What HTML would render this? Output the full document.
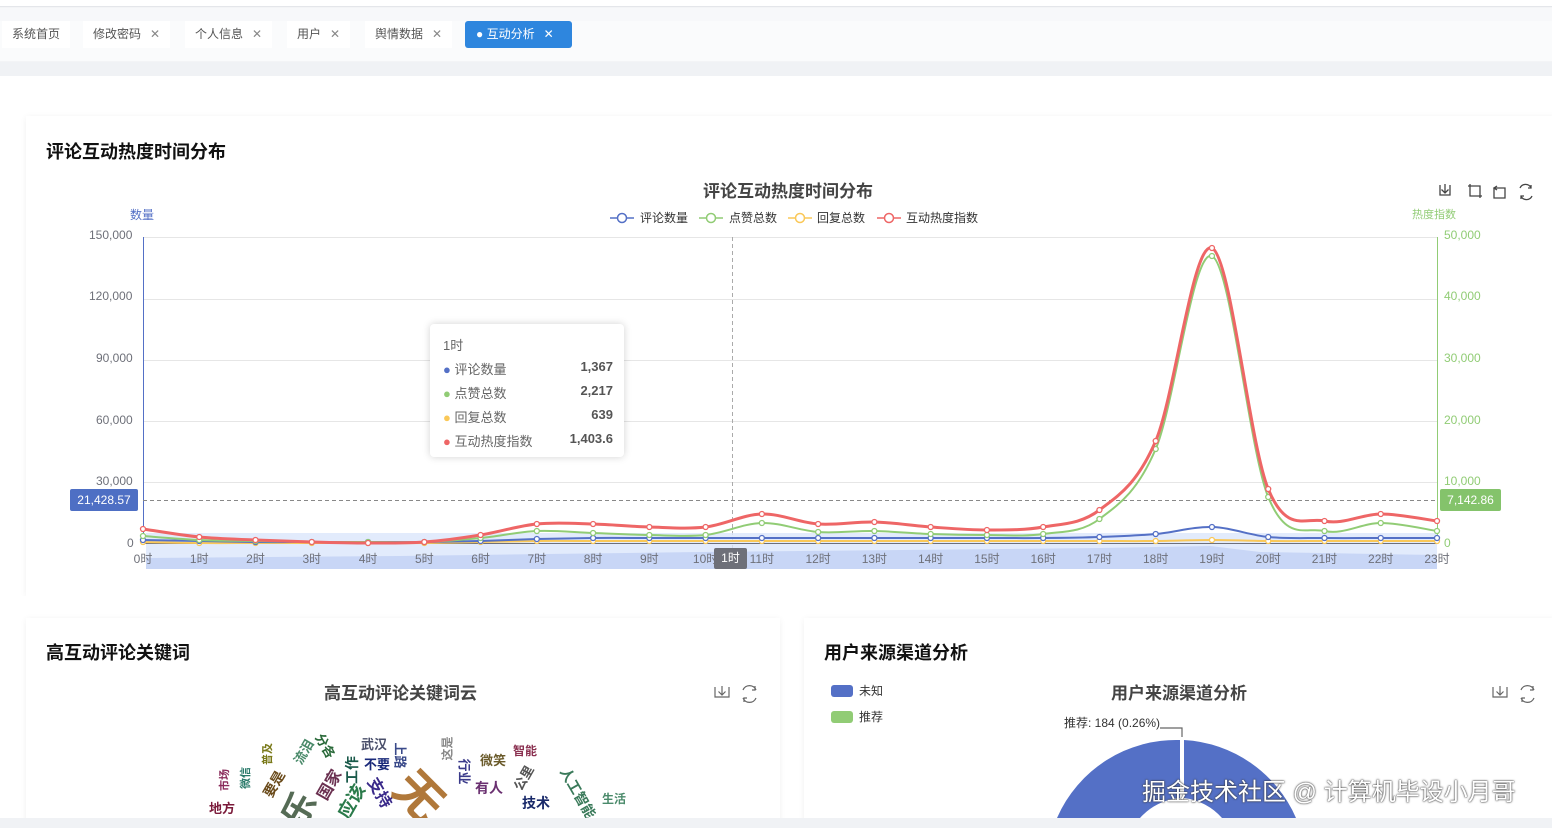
<!DOCTYPE html>
<html><head><meta charset="utf-8">
<style>
*{margin:0;padding:0;box-sizing:border-box}
html,body{width:1552px;height:828px;overflow:hidden}
body{background:#f3f4f6;font-family:"Liberation Sans","Noto Sans CJK SC",sans-serif;position:relative;color:#333}
.abs{position:absolute}
.tab{position:absolute;top:21px;height:27px;line-height:27px;font-size:12px;color:#555;background:#fff;padding:0 10px}
.tab .x{margin-left:9px;color:#888;font-size:12px}
.card{position:absolute;background:#fff;box-shadow:0 1px 6px rgba(0,0,0,.06)}
.h{position:absolute;font-size:18px;font-weight:bold;color:#111}
.ct{position:absolute;font-size:17px;font-weight:bold;color:#444}
.ax{position:absolute;font-size:12px;color:#6e7079;white-space:nowrap}
.wc{position:absolute;font-weight:bold;white-space:nowrap}
</style></head><body>
<div class="abs" style="left:0;top:0;width:1552px;height:7px;background:#fff;border-bottom:1px solid #e4e6ea"></div>
<div class="abs" style="left:0;top:8px;width:1552px;height:53px;background:#f7f8fa"></div>
<div class="abs" style="left:0;top:21px;width:1552px;height:40px;background:#fafbfc"></div>
<div class="tab" style="left:2px">系统首页</div>
<div class="tab" style="left:83px">修改密码<span class="x">✕</span></div>
<div class="tab" style="left:185px">个人信息<span class="x">✕</span></div>
<div class="tab" style="left:287px">用户<span class="x">✕</span></div>
<div class="tab" style="left:365px">舆情数据<span class="x">✕</span></div>
<div class="tab" style="left:465px;width:107px;background:#2e86de;color:#fff;border-radius:3px;padding-left:11px">● 互动分析<span class="x" style="color:#fff">✕</span></div>
<div class="abs" style="left:0;top:62px;width:1552px;height:14px;background:#f0f2f5"></div>
<div class="abs" style="left:0;top:76px;width:1552px;height:742px;background:#fff"></div>

<div class="card" style="left:26px;top:116px;width:1530px;height:480px"></div>
<div class="h" style="left:46px;top:138px">评论互动热度时间分布</div>
<div class="ct" style="left:703px;top:177px">评论互动热度时间分布</div>
<div class="ax" style="left:130px;top:206px;color:#5470c6">数量</div>
<div class="ax" style="left:1412px;top:206px;color:#91cc75;font-size:11px">热度指数</div>
<div class="ax" style="left:640px;top:209px;color:#333">评论数量</div>
<div class="ax" style="left:729px;top:209px;color:#333">点赞总数</div>
<div class="ax" style="left:817px;top:209px;color:#333">回复总数</div>
<div class="ax" style="left:906px;top:209px;color:#333">互动热度指数</div>
<div class="ax" style="left:89px;top:228px">150,000</div>
<div class="ax" style="left:89px;top:289px">120,000</div>
<div class="ax" style="left:96px;top:351px">90,000</div>
<div class="ax" style="left:96px;top:413px">60,000</div>
<div class="ax" style="left:96px;top:474px">30,000</div>
<div class="ax" style="left:127px;top:536px">0</div>
<div class="ax" style="left:1444px;top:228px;color:#91cc75">50,000</div>
<div class="ax" style="left:1444px;top:289px;color:#91cc75">40,000</div>
<div class="ax" style="left:1444px;top:351px;color:#91cc75">30,000</div>
<div class="ax" style="left:1444px;top:413px;color:#91cc75">20,000</div>
<div class="ax" style="left:1444px;top:474px;color:#91cc75">10,000</div>
<div class="ax" style="left:1444px;top:536px;color:#91cc75">0</div>
<div class="abs" style="left:70px;top:489px;width:68px;height:22px;background:#4e6fc4;color:#fff;font-size:12px;line-height:22px;text-align:center;border-radius:2px">21,428.57</div>
<div class="abs" style="left:1440px;top:489px;width:61px;height:22px;background:#84c36b;color:#fff;font-size:12px;line-height:22px;text-align:center;border-radius:2px">7,142.86</div>

<svg class="abs" style="left:0;top:0" width="1552" height="828">
<g stroke="#e6e6e6" stroke-width="1">
<line x1="143" y1="237.5" x2="1437" y2="237.5"/><line x1="143" y1="299.5" x2="1437" y2="299.5"/>
<line x1="143" y1="360.5" x2="1437" y2="360.5"/><line x1="143" y1="421.5" x2="1437" y2="421.5"/>
<line x1="143" y1="482.5" x2="1437" y2="482.5"/></g>
<line x1="143.5" y1="237" x2="143.5" y2="543" stroke="#5470c6"/>
<line x1="1437.5" y1="237" x2="1437.5" y2="543" stroke="#91cc75"/>
<line x1="143" y1="500.5" x2="1437" y2="500.5" stroke="#888" stroke-dasharray="4,3"/>
<line x1="732.5" y1="237" x2="732.5" y2="548" stroke="#aaa" stroke-dasharray="4,3"/>
<rect x="146" y="533" width="1291" height="36" fill="#dbe6fb" opacity=".8"/>
<path d="M146 558 L400 556 L700 552 L1100 548 L1210 546 L1260 552 L1437 555 L1437 569 L146 569Z" fill="#b7c8f2" opacity=".6"/>
<line x1="143" y1="543.5" x2="1437" y2="543.5" stroke="#6e7079"/>
<g id="lines"></g>
<g stroke="#444" fill="none" stroke-width="1.3">
<path d="M1440 185v10h10v-10M1445 184v9M1441.5 189.5l3.5 3.5 3.5-3.5"/>
<path d="M1468 186h12v12M1470 184v12h12"/>
<path d="M1494 188h11v10h-11zM1497 186l-3 2 3 2"/>
<path d="M1520 188a6 6 0 0 1 11 0M1532 196a6 6 0 0 1-11 0M1531 185v3h-3M1521 199v-3h3"/>
</g>
<g stroke-width="1.5" fill="#fff">
<line x1="610" y1="218" x2="634" y2="218" stroke="#5470c6"/><circle cx="622" cy="218" r="4.5" stroke="#5470c6"/>
<line x1="699" y1="218" x2="723" y2="218" stroke="#91cc75"/><circle cx="711" cy="218" r="4.5" stroke="#91cc75"/>
<line x1="788" y1="218" x2="812" y2="218" stroke="#fac858"/><circle cx="800" cy="218" r="4.5" stroke="#fac858"/>
<line x1="877" y1="218" x2="901" y2="218" stroke="#ee6666"/><circle cx="889" cy="218" r="4.5" stroke="#ee6666"/>
</g>
</svg>
<div id="xl"></div>
<div class="abs" style="left:714px;top:548px;width:33px;height:21px;background:#6e7079;color:#fff;font-size:12px;line-height:21px;text-align:center;border-radius:2px">1时</div>

<div class="abs" style="left:430px;top:324px;width:194px;height:133px;background:#fff;box-shadow:0 0 8px rgba(0,0,0,.18);border-radius:4px;font-size:13px;color:#666">
<div style="position:absolute;left:13px;top:11px">1时</div>
<div style="position:absolute;left:13px;top:35px;width:170px"><span style="color:#5470c6">●</span> 评论数量<b style="float:right;color:#555">1,367</b></div>
<div style="position:absolute;left:13px;top:59px;width:170px"><span style="color:#91cc75">●</span> 点赞总数<b style="float:right;color:#555">2,217</b></div>
<div style="position:absolute;left:13px;top:83px;width:170px"><span style="color:#fac858">●</span> 回复总数<b style="float:right;color:#555">639</b></div>
<div style="position:absolute;left:13px;top:107px;width:170px"><span style="color:#ee6666">●</span> 互动热度指数<b style="float:right;color:#555">1,403.6</b></div>
</div>

<div class="abs" style="left:0;top:596px;width:1552px;height:22px;background:#fff"></div>
<div class="card" style="left:26px;top:618px;width:754px;height:210px"></div>
<div class="card" style="left:804px;top:618px;width:752px;height:210px"></div>
<div class="h" style="left:46px;top:639px">高互动评论关键词</div>
<div class="ct" style="left:324px;top:679px">高互动评论关键词云</div>
<div class="h" style="left:824px;top:639px">用户来源渠道分析</div>
<div class="ct" style="left:1111px;top:679px">用户来源渠道分析</div>
<svg class="abs" style="left:0;top:0" width="1552" height="828">
<g stroke="#666" fill="none" stroke-width="1.2">
<path d="M715 687v10h14v-10M722 686v9M718.5 691.5l3.5 3.5 3.5-3.5"/>
<path d="M743 690a7 7 0 0 1 13 0M756 698a7 7 0 0 1-13 0M755 686v4h-3M744 702v-4h3"/>
<path d="M1493 687v10h14v-10M1500 686v9M1496.5 691.5l3.5 3.5 3.5-3.5"/>
<path d="M1521 690a7 7 0 0 1 13 0M1534 698a7 7 0 0 1-13 0M1533 686v4h-3M1522 702v-4h3"/>
<path d="M1160 728h22v9"/>
</g>
<path d="M1180 740 A130 130 0 0 0 1057 818 L1140 818 A60 60 0 0 1 1180 798Z" fill="#5470c6"/>
<path d="M1184 740 A130 130 0 0 1 1296 818 L1222 818 A60 60 0 0 0 1184 798Z" fill="#5470c6"/>
</svg>
<div class="abs" style="left:831px;top:685px;width:22px;height:12px;background:#5470c6;border-radius:3px"></div>
<div class="abs" style="left:831px;top:711px;width:22px;height:12px;background:#91cc75;border-radius:3px"></div>
<div class="ax" style="left:859px;top:682px;color:#333">未知</div>
<div class="ax" style="left:859px;top:708px;color:#333">推荐</div>
<div class="ax" style="left:1064px;top:714px;color:#333">推荐: 184 (0.26%)</div>

<div class="wc" style="left:361px;top:734px;font-size:13px;color:#4a4f6a">武汉</div>
<div class="wc" style="left:364px;top:754px;font-size:13px;color:#1a2a7a">不要</div>
<div class="wc" style="left:480px;top:750px;font-size:13px;color:#6a5a2a">微笑</div>
<div class="wc" style="left:513px;top:742px;font-size:12px;color:#8a3050">智能</div>
<div class="wc" style="left:475px;top:778px;font-size:14px;color:#6a3070">有人</div>
<div class="wc" style="left:522px;top:793px;font-size:14px;color:#1a2a6a">技术</div>
<div class="wc" style="left:602px;top:790px;font-size:12px;color:#4a8a6a">生活</div>
<div class="wc" style="left:209px;top:798px;font-size:13px;color:#7a1a3a">地方</div>
<div class="wc" style="left:398px;top:758px;font-size:48px;color:#b0783a;transform:rotate(45deg)">无</div>
<div class="wc" style="left:280px;top:784px;font-size:34px;color:#556b55;transform:rotate(-60deg)">乐</div>
<div class="wc" style="left:290px;top:742px;font-size:13px;color:#4a8a6a;transform:rotate(-60deg)">流泪</div>
<div class="wc" style="left:313px;top:736px;font-size:13px;color:#2a6a3a;transform:rotate(60deg)">分各</div>
<div class="wc" style="left:312px;top:772px;font-size:16px;color:#6a3050;transform:rotate(-60deg)">国家</div>
<div class="wc" style="left:338px;top:760px;font-size:14px;color:#1a5a4a;transform:rotate(-90deg)">工作</div>
<div class="wc" style="left:365px;top:780px;font-size:16px;color:#3a2a8a;transform:rotate(60deg)">支持</div>
<div class="wc" style="left:333px;top:788px;font-size:18px;color:#2a7a4a;transform:rotate(-60deg)">应该</div>
<div class="wc" style="left:260px;top:774px;font-size:14px;color:#6a4a1a;transform:rotate(-60deg)">要是</div>
<div class="wc" style="left:388px;top:746px;font-size:13px;color:#3a4a8a;transform:rotate(90deg)">上路</div>
<div class="wc" style="left:452px;top:762px;font-size:13px;color:#3a3a8a;transform:rotate(90deg)">行业</div>
<div class="wc" style="left:435px;top:740px;font-size:12px;color:#888;transform:rotate(-90deg)">这是</div>
<div class="wc" style="left:510px;top:768px;font-size:13px;color:#555;transform:rotate(-60deg)">公里</div>
<div class="wc" style="left:550px;top:783px;font-size:14px;color:#3a7a5a;transform:rotate(60deg)">人工智能</div>
<div class="wc" style="left:256px;top:746px;font-size:11px;color:#7a7a1a;transform:rotate(-90deg)">普及</div>
<div class="wc" style="left:234px;top:770px;font-size:11px;color:#2a7a6a;transform:rotate(-90deg)">微信</div>
<div class="wc" style="left:213px;top:772px;font-size:11px;color:#8a2a5a;transform:rotate(-90deg)">市场</div>

<div class="abs" style="left:1142px;top:772px;font-size:24px;color:#fff;text-shadow:0 0 2px #333,0 0 1px #333;white-space:nowrap">掘金技术社区 @ 计算机毕设小月哥</div>
<div class="abs" style="left:0;top:818px;width:1552px;height:10px;background:#f0f2f5"></div>

<script>
var xs=[];for(var i=0;i<24;i++)xs.push(143+i*1294/23);
function sm(ys){var p='M'+xs[0]+' '+ys[0];for(var i=0;i<ys.length-1;i++){var x0=xs[Math.max(i-1,0)],y0=ys[Math.max(i-1,0)],x1=xs[i],y1=ys[i],x2=xs[i+1],y2=ys[i+1],x3=xs[Math.min(i+2,23)],y3=ys[Math.min(i+2,23)];p+=' C'+(x1+(x2-x0)/6)+' '+(y1+(y2-y0)/6)+' '+(x2-(x3-x1)/6)+' '+(y2-(y3-y1)/6)+' '+x2+' '+y2;}return p;}
var red=[529,537,540,542,543,542,535,524,524,527,527,514,524,522,527,530,527,510,441,248,489,521,514,521];
var grn=[536,540,541,542,542,542,538,531,533,535,535,523,532,531,534,535,534,519,449,256,497,531,523,531];
var blu=[540,541,542,542,542,542,541,539,538,538,538,538,538,538,538,538,538,537,534,527,537,538,538,538];
var yel=[542,543,543,543,543,543,542,541,541,541,541,541,541,541,541,541,541,541,541,540,541,541,541,541];
var g=document.getElementById('lines'),h='';
[[yel,'#fac858'],[blu,'#5470c6'],[grn,'#91cc75'],[red,'#ee6666']].forEach(function(s){
h+='<path d="'+sm(s[0])+'" fill="none" stroke="'+s[1]+'" stroke-width="'+(s[1]=='#ee6666'?3:2)+'"/>';
s[0].forEach(function(y,i){h+='<circle cx="'+xs[i]+'" cy="'+y+'" r="2.5" fill="#fff" stroke="'+s[1]+'" stroke-width="1.3"/>';});});
g.innerHTML=h;
var xl='';for(var i=0;i<24;i++){xl+='<div class="ax" style="left:'+(xs[i]-20)+'px;top:550px;width:40px;text-align:center">'+i+'时</div>';}
document.getElementById('xl').innerHTML=xl;
</script>
</body></html>
